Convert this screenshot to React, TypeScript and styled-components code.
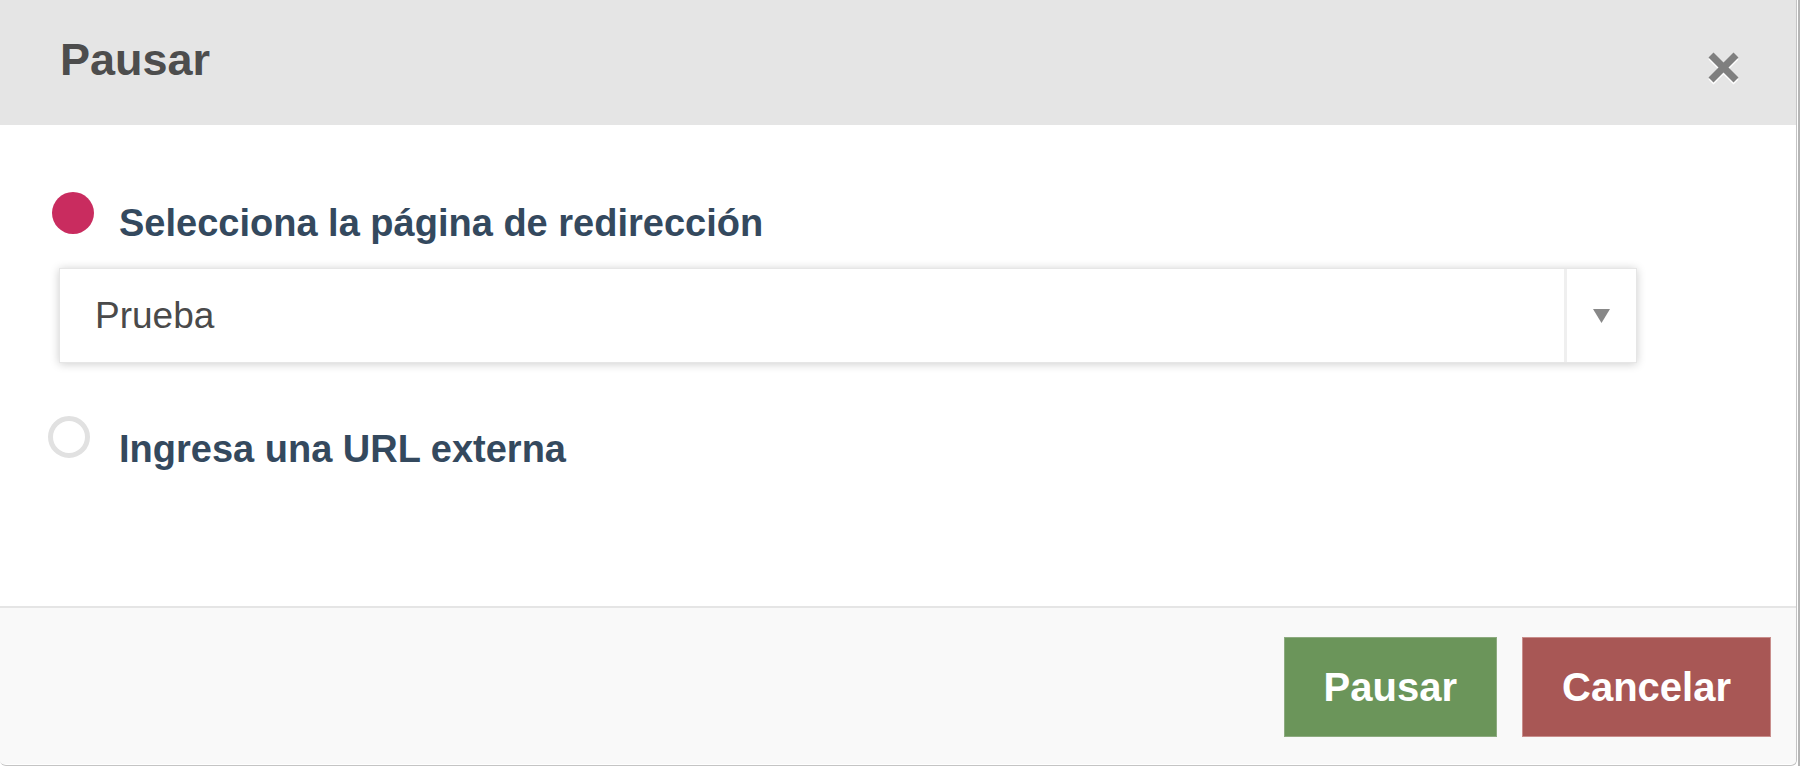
import React from "react";
import styled, { createGlobalStyle } from "styled-components";

const GlobalStyle = createGlobalStyle`
  html, body {
    margin: 0;
    padding: 0;
    background: #ffffff;
    font-family: "Liberation Sans", Arial, sans-serif;
  }
`;

const Page = styled.div`
  display: flex;
  width: 1802px;
  height: 766px;
  overflow: hidden;
`;

const Modal = styled.div`
  width: 1797px;
  box-sizing: border-box;
  border-right: 1px solid #c4c4c4;
  border-bottom: 1px solid #c4c4c4;
  border-radius: 0 0 6px 6px;
  overflow: hidden;
  display: flex;
  flex-direction: column;
`;

const Edge = styled.div`
  width: 2px;
  margin-left: 1px;
  background: #b5b5b5;
`;

const Header = styled.div`
  height: 125px;
  background: #e5e5e5;
  display: flex;
  align-items: flex-start;
  justify-content: space-between;
  padding: 0 57px 0 60px;
`;

const Title = styled.h4`
  margin: 34px 0 0;
  font-size: 45px;
  line-height: 52px;
  font-weight: 700;
  color: #4d4d4d;
`;

const Close = styled.button`
  margin-top: 52px;
  padding: 0;
  border: 0;
  background: none;
  width: 31px;
  height: 34px;
  cursor: pointer;
`;

const Body = styled.div`
  padding: 67px 0 135px 52px;
  display: flex;
  flex-direction: column;
`;

const Option = styled.label<{ $offset: number }>`
  display: flex;
  align-items: flex-start;
  margin-left: ${(p) => p.$offset}px;
  cursor: pointer;
`;

const Radio = styled.span<{ $checked?: boolean }>`
  flex: none;
  width: 42px;
  height: 42px;
  box-sizing: border-box;
  border-radius: 50%;
  background: ${(p) => (p.$checked ? "#c92c5f" : "#ffffff")};
  border: ${(p) => (p.$checked ? "none" : "5px solid #e1e1e1")};
`;

const Label = styled.span<{ $gap: number; $top: number }>`
  margin-left: ${(p) => p.$gap}px;
  margin-top: ${(p) => p.$top}px;
  font-size: 38px;
  line-height: 44px;
  font-weight: 700;
  color: #34495e;
`;

const Select = styled.div`
  margin: 23px 0 53px 7px;
  width: 1578px;
  height: 95px;
  box-sizing: border-box;
  display: flex;
  background: #fff;
  border: 1px solid #e6e6e6;
  box-shadow: 0 1px 9px rgba(0, 0, 0, 0.2);
`;

const SelectValue = styled.div`
  flex: 1;
  display: flex;
  align-items: center;
  padding-left: 35px;
  font-size: 37px;
  color: #4a4a4a;
`;

const SelectArrow = styled.div`
  width: 69px;
  border-left: 3px solid #efefef;
  display: flex;
  align-items: center;
  justify-content: center;
`;

const Footer = styled.div`
  border-top: 2px solid #e5e5e5;
  background: #f9f9f9;
  padding: 29px 25px 27px;
  display: flex;
  justify-content: flex-end;
  gap: 25px;
`;

const Button = styled.button<{ $tone: "ok" | "cancel" }>`
  height: 100px;
  padding: 0 39px;
  box-sizing: border-box;
  font-family: "Liberation Sans", Arial, sans-serif;
  font-size: 40px;
  font-weight: 700;
  color: #ffffff;
  cursor: pointer;
  background: ${(p) => (p.$tone === "ok" ? "#6b955a" : "#a85755")};
  border: 1px solid ${(p) => (p.$tone === "ok" ? "#8dab80" : "#c98e8c")};
`;

const CloseIcon = () => (
  <svg width="31" height="34" viewBox="0 0 31 34">
    <g stroke="#ffffff" strokeWidth="7">
      <line x1="3" y1="5" x2="28" y2="30" />
      <line x1="28" y1="5" x2="3" y2="30" />
    </g>
    <g stroke="#7f7f7f" strokeWidth="7">
      <line x1="3" y1="3" x2="28" y2="28" />
      <line x1="28" y1="3" x2="3" y2="28" />
    </g>
  </svg>
);

export default function App() {
  return (
    <Page>
      <GlobalStyle />
      <Modal>
        <Header>
          <Title>Pausar</Title>
          <Close aria-label="Cerrar">
            <CloseIcon />
          </Close>
        </Header>
        <Body>
          <Option $offset={0}>
            <Radio $checked />
            <Label $gap={25} $top={9}>
              Selecciona la página de redirección
            </Label>
          </Option>
          <Select>
            <SelectValue>Prueba</SelectValue>
            <SelectArrow>
              <svg width="17" height="14" viewBox="0 0 17 14">
                <polygon points="0,0 17,0 8.5,14" fill="#888888" />
              </svg>
            </SelectArrow>
          </Select>
          <Option $offset={-4}>
            <Radio />
            <Label $gap={29} $top={11}>
              Ingresa una URL externa
            </Label>
          </Option>
        </Body>
        <Footer>
          <Button $tone="ok">Pausar</Button>
          <Button $tone="cancel">Cancelar</Button>
        </Footer>
      </Modal>
      <Edge />
    </Page>
  );
}
